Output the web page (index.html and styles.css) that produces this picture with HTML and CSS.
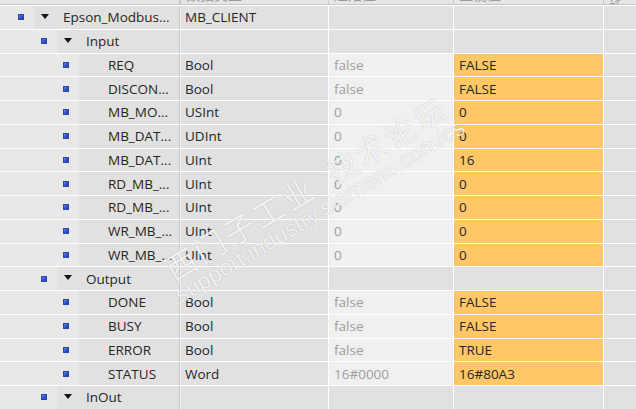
FILE: index.html
```html
<!DOCTYPE html>
<html lang="zh">
<head>
<meta charset="utf-8">
<title>MB_CLIENT</title>
<link rel="stylesheet" href="styles.css">
</head>
<body>
<div class="table">
  <div class="head">
    <div class="hc name-h"></div>
    <div class="hc"><span>数据类型</span></div>
    <div class="hc"><span>起始值</span></div>
    <div class="hc"><span>监视值</span></div>
    <div class="hc last"><span>修改值</span></div>
  </div>
  <div class="rows">
    <div class="row group">
      <div class="c name"><span class="gut lv0"><i class="sq"></i></span><span class="tri"></span><span class="label">Epson_Modbus...</span></div>
      <div class="c type">MB_CLIENT</div>
      <div class="c start"></div>
      <div class="c mon"></div>
      <div class="c last"></div>
    </div>
    <div class="row group">
      <div class="c name"><span class="gut lv1"><i class="sq"></i></span><span class="tri"></span><span class="label">Input</span></div>
      <div class="c type"></div>
      <div class="c start"></div>
      <div class="c mon"></div>
      <div class="c last"></div>
    </div>
    <div class="row data">
      <div class="c name"><span class="gut lv2"><i class="sq"></i></span><span class="label leaf">REQ</span></div>
      <div class="c type">Bool</div>
      <div class="c start">false</div>
      <div class="c mon">FALSE</div>
      <div class="c last"></div>
    </div>
    <div class="row data">
      <div class="c name"><span class="gut lv2"><i class="sq"></i></span><span class="label leaf">DISCON...</span></div>
      <div class="c type">Bool</div>
      <div class="c start">false</div>
      <div class="c mon">FALSE</div>
      <div class="c last"></div>
    </div>
    <div class="row data">
      <div class="c name"><span class="gut lv2"><i class="sq"></i></span><span class="label leaf">MB_MO...</span></div>
      <div class="c type">USInt</div>
      <div class="c start">0</div>
      <div class="c mon">0</div>
      <div class="c last"></div>
    </div>
    <div class="row data">
      <div class="c name"><span class="gut lv2"><i class="sq"></i></span><span class="label leaf">MB_DAT...</span></div>
      <div class="c type">UDInt</div>
      <div class="c start">0</div>
      <div class="c mon">0</div>
      <div class="c last"></div>
    </div>
    <div class="row data">
      <div class="c name"><span class="gut lv2"><i class="sq"></i></span><span class="label leaf">MB_DAT...</span></div>
      <div class="c type">UInt</div>
      <div class="c start">0</div>
      <div class="c mon">16</div>
      <div class="c last"></div>
    </div>
    <div class="row data">
      <div class="c name"><span class="gut lv2"><i class="sq"></i></span><span class="label leaf">RD_MB_...</span></div>
      <div class="c type">UInt</div>
      <div class="c start">0</div>
      <div class="c mon">0</div>
      <div class="c last"></div>
    </div>
    <div class="row data">
      <div class="c name"><span class="gut lv2"><i class="sq"></i></span><span class="label leaf">RD_MB_...</span></div>
      <div class="c type">UInt</div>
      <div class="c start">0</div>
      <div class="c mon">0</div>
      <div class="c last"></div>
    </div>
    <div class="row data">
      <div class="c name"><span class="gut lv2"><i class="sq"></i></span><span class="label leaf">WR_MB_...</span></div>
      <div class="c type">UInt</div>
      <div class="c start">0</div>
      <div class="c mon">0</div>
      <div class="c last"></div>
    </div>
    <div class="row data">
      <div class="c name"><span class="gut lv2"><i class="sq"></i></span><span class="label leaf">WR_MB_...</span></div>
      <div class="c type">UInt</div>
      <div class="c start">0</div>
      <div class="c mon">0</div>
      <div class="c last"></div>
    </div>
    <div class="row group">
      <div class="c name"><span class="gut lv1"><i class="sq"></i></span><span class="tri"></span><span class="label">Output</span></div>
      <div class="c type"></div>
      <div class="c start"></div>
      <div class="c mon"></div>
      <div class="c last"></div>
    </div>
    <div class="row data">
      <div class="c name"><span class="gut lv2"><i class="sq"></i></span><span class="label leaf">DONE</span></div>
      <div class="c type">Bool</div>
      <div class="c start">false</div>
      <div class="c mon">FALSE</div>
      <div class="c last"></div>
    </div>
    <div class="row data">
      <div class="c name"><span class="gut lv2"><i class="sq"></i></span><span class="label leaf">BUSY</span></div>
      <div class="c type">Bool</div>
      <div class="c start">false</div>
      <div class="c mon">FALSE</div>
      <div class="c last"></div>
    </div>
    <div class="row data">
      <div class="c name"><span class="gut lv2"><i class="sq"></i></span><span class="label leaf">ERROR</span></div>
      <div class="c type">Bool</div>
      <div class="c start">false</div>
      <div class="c mon">TRUE</div>
      <div class="c last"></div>
    </div>
    <div class="row data">
      <div class="c name"><span class="gut lv2"><i class="sq"></i></span><span class="label leaf">STATUS</span></div>
      <div class="c type">Word</div>
      <div class="c start">16#0000</div>
      <div class="c mon">16#80A3</div>
      <div class="c last"></div>
    </div>
    <div class="row group">
      <div class="c name"><span class="gut lv1"><i class="sq"></i></span><span class="tri"></span><span class="label">InOut</span></div>
      <div class="c type"></div>
      <div class="c start"></div>
      <div class="c mon"></div>
      <div class="c last"></div>
    </div>
  </div>
  <div class="wm">
    <div class="wm-cn">西门子工业<span class="wm-gap"></span>技术论坛</div>
    <div class="wm-url">support.industry.siemens.com/cs</div>
  </div>
</div>
</body>
</html>
```
FILE: styles.css
```css
* { box-sizing: border-box; }
html, body { margin: 0; padding: 0; }
body {
  width: 636px;
  height: 409px;
  overflow: hidden;
  background: #e1e1e1;
  font-family: "Open Sans", "Noto Sans", sans-serif;
  font-size: 13.5px;
  color: #262626;
}
.table { position: relative; height: 409px; overflow: hidden; }

.head {
  display: grid;
  grid-template-columns: 181px 148px 125px 150px 1fr;
  height: 5px;
  background: #e6e6e6;
  border-bottom: 1px solid #c6c6c6;
  overflow: hidden;
}
.hc {
  border-right: 1px solid #c8c8c8;
  padding-left: 5px;
  overflow: hidden;
  font-family: "Noto Sans CJK SC", sans-serif;
  font-size: 14px;
  line-height: 14px;
  color: #9a9a9a;
}
.hc span { display: block; margin-top: -13px; }
.hc.name-h { border-right: 2px solid #c8c8c8; }
.hc.last { border-right: 0; }

.rows { border-top: 1px solid #fff; }
.row {
  display: grid;
  grid-template-columns: 181px 148px 125px 150px 1fr;
  height: 23.75px;
  border-bottom: 1px solid #fff;
}
.c {
  display: flex;
  align-items: center;
  padding-left: 5px;
  border-right: 1px solid #fff;
  white-space: nowrap;
  overflow: hidden;
}
.c.last { border-right: 0; }
.name {
  padding-left: 0;
  border-right: 1px solid #f1f1f1;
  box-shadow: inset -1px 0 #c9c9c9;
}
.type { padding-left: 4px; }
.row.data .start { background: #f0f0f0; color: #9d9d9d; }
.row.data .mon { background: #ffc766; padding-left: 5px; }

.gut {
  align-self: stretch;
  display: flex;
  align-items: center;
  justify-content: flex-end;
  padding-right: 10px;
  background: #e8e8e8;
  flex: none;
}
.gut.lv0 { width: 34px; }
.gut.lv1 { width: 57px; }
.gut.lv2 { width: 79px; }
.sq {
  display: block;
  width: 6px;
  height: 6px;
  border: 1px solid #2a46b0;
  background: linear-gradient(135deg, #6a86e6 0%, #3454c8 55%, #2440a8 100%);
}
.tri {
  flex: none;
  width: 0;
  height: 0;
  margin-left: 7px;
  margin-bottom: 2px;
  border-left: 4px solid transparent;
  border-right: 4px solid transparent;
  border-top: 5px solid #141414;
}
.label { margin-left: 14px; }
.label.leaf { margin-left: 29px; }

.wm {
  position: absolute;
  left: 312px;
  top: 198px;
  transform: translate(-50%, -50%) rotate(-31deg);
  text-align: center;
  white-space: nowrap;
  pointer-events: none;
  color: rgba(255, 255, 255, 0.85);
  text-shadow: 0 0 1px rgba(0, 0, 0, 0.28);
}
.wm-cn {
  font-family: "Noto Sans CJK SC", sans-serif;
  font-size: 31px;
  line-height: 31px;
  letter-spacing: 3px;
}
.wm-gap { display: inline-block; width: 18px; }
.wm-url {
  font-family: "Liberation Sans", Arial, sans-serif;
  font-size: 23px;
  line-height: 25px;
}
```
